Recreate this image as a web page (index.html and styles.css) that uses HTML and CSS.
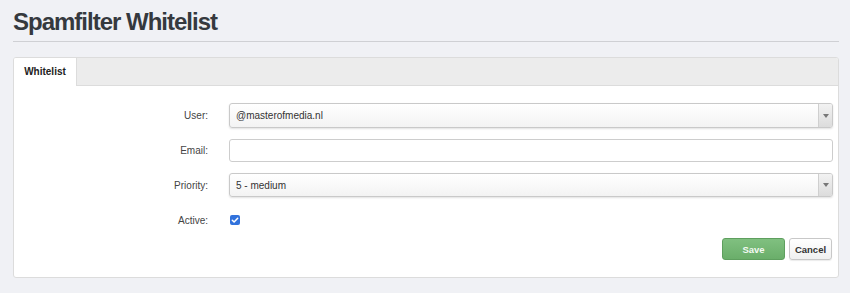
FILE: index.html
```html
<!DOCTYPE html>
<html>
<head>
<meta charset="utf-8">
<link rel="stylesheet" href="styles.css">
</head>
<body>
<div class="page">
  <h1 class="title">Spamfilter Whitelist</h1>
  <div class="panel">
    <div class="tabs">
      <div class="tab">Whitelist</div>
    </div>
    <div class="form">
      <label class="label">User:</label>
      <div class="select tall"><span class="value">@masterofmedia.nl</span><span class="arrow"><svg width="6" height="4" viewBox="0 0 6 4"><path d="M0 0h6L3 4z" fill="#777"/></svg></span></div>

      <label class="label">Email:</label>
      <div class="input"></div>

      <label class="label">Priority:</label>
      <div class="select mid"><span class="value">5 - medium</span><span class="arrow"><svg width="6" height="4" viewBox="0 0 6 4"><path d="M0 0h6L3 4z" fill="#777"/></svg></span></div>

      <label class="label">Active:</label>
      <div class="checkrow"><span class="check"><svg width="10" height="10" viewBox="0 0 10 10"><path d="M2.3 5.2l1.8 1.8 3.6-3.8" fill="none" stroke="#fff" stroke-width="1.5" stroke-linecap="round" stroke-linejoin="round"/></svg></span></div>

      <div class="buttons">
        <button class="btn save">Save</button>
        <button class="btn cancel">Cancel</button>
      </div>
    </div>
  </div>
</div>
</body>
</html>
```

FILE: styles.css
```css
html, body {
  margin: 0;
  padding: 0;
  background: #f0f1f5;
  font-family: "Liberation Sans", Arial, Helvetica, sans-serif;
  color: #333;
}
.page {
  padding: 0 11px 0 13px;
}
.title {
  margin: 0;
  padding-top: 6px;
  height: 35px;
  font-size: 24px;
  line-height: 32px;
  font-weight: bold;
  color: #35393e;
  border-bottom: 1px solid #cfd0d4;
  letter-spacing: -1px;
}
.panel {
  margin-top: 15px;
  background: #fff;
  border: 1px solid #dcdcdc;
  border-radius: 3px;
  overflow: hidden;
}
.tabs {
  height: 27px;
  background: #ececec;
  border-bottom: 1px solid #dcdcdc;
  display: flex;
}
.tab {
  width: 63px;
  height: 28px;
  background: #fff;
  border-right: 1px solid #dcdcdc;
  font-size: 10px;
  font-weight: bold;
  color: #222;
  line-height: 28px;
  text-align: center;
  box-sizing: border-box;
}
.form {
  display: grid;
  grid-template-columns: 194px 1fr;
  column-gap: 21px;
  row-gap: 11px;
  padding: 17px 5px 17px 0;
  align-items: center;
}
.label {
  text-align: right;
  font-size: 10px;
  color: #444;
}
.select {
  display: flex;
  align-items: center;
  border: 1px solid #c9c9c9;
  border-radius: 3px;
  background: linear-gradient(#ffffff, #f3f3f3);
  box-shadow: 0 1px 2px rgba(0,0,0,0.12);
  box-sizing: border-box;
  overflow: hidden;
}
.select.tall { height: 25px; }
.select.mid { height: 24px; }
.value {
  flex: 1;
  padding-left: 6px;
  font-size: 10px;
  color: #333;
}
.arrow {
  width: 13px;
  align-self: stretch;
  border-left: 1px solid #cfcfcf;
  background: linear-gradient(#f2f2f2, #dcdcdc);
  display: flex;
  align-items: center;
  justify-content: center;
}
.input {
  height: 23px;
  border: 1px solid #cdcdcd;
  border-radius: 3px;
  background: #fff;
  box-sizing: border-box;
}
.checkrow {
  height: 24px;
  display: flex;
  align-items: center;
}
.check {
  width: 10px;
  height: 10px;
  margin-left: 1px;
  background: #3172dc;
  border-radius: 2px;
  display: flex;
}
.buttons {
  grid-column: 1 / 3;
  display: flex;
  justify-content: flex-end;
  gap: 4px;
  margin-top: -5px;
  padding-right: 1px;
}
.btn {
  height: 22px;
  font-family: "Liberation Sans", Arial, sans-serif;
  font-size: 9.5px;
  font-weight: bold;
  border-radius: 3px;
  padding: 0;
  box-sizing: border-box;
}
.save {
  width: 63px;
  color: #f3faf3;
  background: linear-gradient(#80c080, #6aae6a);
  border: 1px solid #5e9f5e;
}
.cancel {
  width: 43px;
  color: #333;
  background: linear-gradient(#ffffff, #f0f0f0);
  border: 1px solid #c8c8c8;
  box-shadow: 0 1px 1px rgba(0,0,0,0.08);
}
```
